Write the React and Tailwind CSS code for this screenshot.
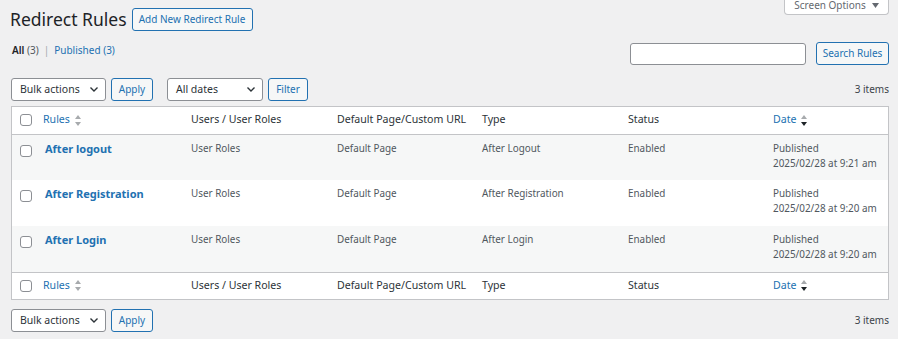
import React from 'react';

const rows = [
  { title: 'After logout', type: 'After Logout', date: '2025/02/28 at 9:21 am' },
  { title: 'After Registration', type: 'After Registration', date: '2025/02/28 at 9:20 am' },
  { title: 'After Login', type: 'After Login', date: '2025/02/28 at 9:20 am' },
];

function Checkbox() {
  return <div className="w-[12px] h-[12px] rounded-[3px] border border-[#8c8f94] bg-white" />;
}

function SortArrows({ active }) {
  return (
    <svg width="6" height="11" viewBox="0 0 6 11" className="ml-[5px]">
      <polygon points="3,0 6,4 0,4" fill="#a7aaad" />
      <polygon points="0,7 6,7 3,11" fill={active ? '#1d2327' : '#a7aaad'} />
    </svg>
  );
}

function Select({ label, width }) {
  return (
    <div
      className={`flex items-center justify-between h-[23px] pl-[8px] pr-[7px] bg-white border border-[#8c8f94] rounded-[3px] text-[10.5px] text-[#2c3338] ${width}`}
    >
      <span>{label}</span>
      <svg width="8" height="5" viewBox="0 0 8 5" fill="none" stroke="#2c3338" strokeWidth="1.4">
        <polyline points="0.5,0.5 4,4 7.5,0.5" />
      </svg>
    </div>
  );
}

function Button({ children, className = '' }) {
  return (
    <div
      className={`flex items-center justify-center h-[23px] bg-[#f6f7f7] border border-[#2271b1] rounded-[3px] text-[10px] text-[#2271b1] ${className}`}
    >
      {children}
    </div>
  );
}

function HeaderRow({ top }) {
  const border = top ? 'border-b' : 'border-t';
  return (
    <tr className={`${border} border-[#c3c4c7] text-[10.6px] text-[#2c3338] whitespace-nowrap`}>
      <th className="h-[27px] pl-[8px] align-middle font-normal">
        <Checkbox />
      </th>
      <th className="pl-[10px] text-left font-normal">
        <span className="flex items-center text-[#2271b1]">
          Rules
          <SortArrows />
        </span>
      </th>
      <th className="pl-[10px] text-left font-normal">Users / User Roles</th>
      <th className="pl-[10px] text-left font-normal">Default Page/Custom URL</th>
      <th className="pl-[10px] text-left font-normal">Type</th>
      <th className="pl-[10px] text-left font-normal">Status</th>
      <th className="pl-[10px] text-left font-normal">
        <span className="flex items-center text-[#2271b1]">
          Date
          <SortArrows active />
        </span>
      </th>
    </tr>
  );
}

export default function App() {
  return (
    <div
      className="h-[339px] overflow-hidden bg-[#f0f0f1] pl-[11px] pr-[9px]"
      style={{ fontFamily: '"Noto Sans", "Open Sans", sans-serif' }}
    >
      {/* Title row */}
      <div className="flex items-start justify-between">
        <div className="flex items-center gap-[5px] mt-[8px] -ml-[1px]">
          <h1 className="text-[17.5px] leading-[23px] text-[#1d2327]">Redirect Rules</h1>
          <Button className="w-[121px]">Add New Redirect Rule</Button>
        </div>
        <div className="flex items-start justify-center w-[105px] h-[15px] bg-white border border-t-0 border-[#c3c4c7] rounded-b-[4px] text-[10px] leading-[11px] text-[#646970]">
          <span className="flex items-center gap-[6px]">
            Screen Options
            <svg width="7" height="5" viewBox="0 0 7 5">
              <polygon points="0,0 7,0 3.5,5" fill="#646970" />
            </svg>
          </span>
        </div>
      </div>

      {/* Views + search */}
      <div className="flex items-start justify-between mt-[11px]">
        <div className="text-[10px] leading-[16px] text-[#50575e] ml-[1px]">
          <span className="font-semibold text-[#1d2327]">All</span> (3)
          <span className="text-[#a7aaad] mx-[5px]">|</span>
          <span className="text-[#2271b1]">Published (3)</span>
        </div>
        <div className="flex items-center gap-[10px]">
          <div className="w-[176px] h-[22px] bg-white border border-[#8c8f94] rounded-[3px]" />
          <Button className="w-[73px] h-[22px]">Search Rules</Button>
        </div>
      </div>

      {/* Top tablenav */}
      <div className="flex items-center justify-between mt-[13px]">
        <div className="flex items-center">
          <Select label="Bulk actions" width="w-[95px]" />
          <Button className="w-[42px] ml-[5px]">Apply</Button>
          <Select label="All dates" width="w-[96px] ml-[14px]" />
          <Button className="w-[40px] ml-[5px]">Filter</Button>
        </div>
        <span className="text-[10px] text-[#3c434a]">3 items</span>
      </div>

      {/* Table */}
      <div className="mt-[5px] bg-white border border-[#c3c4c7]">
        <table className="w-full table-fixed border-collapse">
          <colgroup>
            <col className="w-[21px]" />
            <col className="w-[148px]" />
            <col className="w-[146px]" />
            <col className="w-[145px]" />
            <col className="w-[146px]" />
            <col className="w-[145px]" />
            <col className="w-[125px]" />
          </colgroup>
          <thead>
            <HeaderRow top />
          </thead>
          <tbody className="text-[9.9px] leading-[15px] text-[#50575e]">
            {rows.map((r, i) => (
              <tr key={r.title} className={i % 2 === 0 ? 'bg-[#f6f7f7]' : 'bg-white'}>
                <td className="h-[46px] pl-[8px] pt-[10px] align-top">
                  <Checkbox />
                </td>
                <td className="pl-[12px] pt-[6px] align-top">
                  <span className="text-[11px] font-bold text-[#2271b1]">{r.title}</span>
                </td>
                <td className="pl-[10px] pt-[6px] align-top">User Roles</td>
                <td className="pl-[10px] pt-[6px] align-top">Default Page</td>
                <td className="pl-[10px] pt-[6px] align-top">{r.type}</td>
                <td className="pl-[10px] pt-[6px] align-top">Enabled</td>
                <td className="pl-[10px] pt-[6px] align-top whitespace-nowrap">
                  Published
                  <br />
                  {r.date}
                </td>
              </tr>
            ))}
          </tbody>
          <tfoot>
            <HeaderRow />
          </tfoot>
        </table>
      </div>

      {/* Bottom tablenav */}
      <div className="flex items-center justify-between mt-[9px]">
        <div className="flex items-center">
          <Select label="Bulk actions" width="w-[95px]" />
          <Button className="w-[42px] ml-[5px]">Apply</Button>
        </div>
        <span className="text-[10px] text-[#3c434a]">3 items</span>
      </div>
    </div>
  );
}
